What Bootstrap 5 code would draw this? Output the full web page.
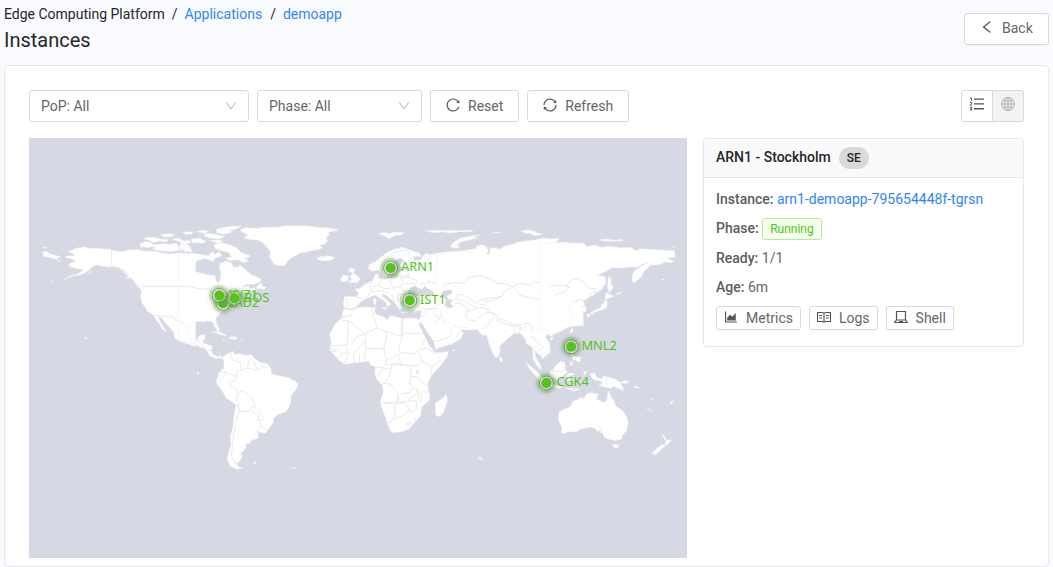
<!DOCTYPE html>
<html lang="en">
<head>
<meta charset="utf-8">
<meta name="viewport" content="width=device-width, initial-scale=1">
<title>Instances</title>
<link rel="stylesheet" href="https://cdn.jsdelivr.net/npm/bootstrap@5.3.0/dist/css/bootstrap.min.css">
<style>
body{background:#fafbff;font:14px/22px Roboto,sans-serif;color:#262626;overflow:hidden;height:567px}
a{color:#2f86f6;text-decoration:none}
h1{font-size:20px;line-height:28px;font-weight:400;margin:1px 0 0}
.page-head{height:65px;padding:3px 4px 0}
.crumb-sep{margin:0 7px}
.tool-btn{--bs-btn-font-size:14px;--bs-btn-line-height:22px;--bs-btn-color:#666;--bs-btn-bg:#fff;--bs-btn-border-color:#d9d9d9;--bs-btn-border-radius:3px;--bs-btn-padding-y:0;--bs-btn-padding-x:15px;height:32px;display:inline-flex;align-items:center;box-shadow:0 2px 0 rgba(0,0,0,.015);white-space:nowrap}
.tool-btn svg{margin-right:8px;position:relative;top:-1px;color:#555}
.small-btn{height:24px;--bs-btn-padding-x:7px;--bs-btn-line-height:20px;padding-bottom:1px}
.back-btn{width:85px;margin:10px 0 0;padding-bottom:2px}
.ico{width:14px;height:14px;fill:currentColor;flex:none}
.main-card{margin:0 4px;height:502px;border:1px solid #e8e8eb;border-radius:4px;padding:24px}
.pick{height:32px;border:1px solid #d9d9d9;border-radius:3px;padding:0 11px;color:#666}
.pick .ico{width:12px;height:12px;color:#bfbfbf}
.seg-btn{width:32px;padding:0;justify-content:center}
.seg-btn svg{margin:0;top:-2px}
.seg-on{--bs-btn-bg:#f3f3f3}
.seg-on svg{color:#b0b0b0}
.map-box{width:658px;height:420px;background:#d6d9e4}
.side-card{width:321px;height:209px;--bs-card-border-color:#e8e8e8;--bs-card-border-radius:3px;--bs-card-inner-border-radius:2px;--bs-card-cap-bg:#fafafa;color:#666}
.side-card .card-header{height:39px;padding:0 12px 2px;font-weight:500;color:#262626;border-color:#e8e8e8}
.side-card .card-body{padding:10px 12px}
.side-card b{font-weight:500;color:#5c5c5c}
.cc{font-size:12px;line-height:22px;height:22px;background:#d9d9d9;border-radius:11px;padding:0 8px;margin-left:8px;position:relative;top:1px}
.run{font-size:12px;line-height:20px;color:#52c41a;background:#f6ffed;border:1px solid #b7eb8f;border-radius:3px;padding:0 7.5px;margin-left:3px;position:relative;top:1px}
.land{fill:#fff;stroke:#eee;stroke-width:1.5;stroke-linejoin:round}
.sea{fill:#d6d9e4}
.lake{fill:#ececf0}
.line{fill:none;stroke:#e7e7e7;stroke-width:2.8;stroke-linejoin:round}
.pins text{font:12.8px "Noto Sans","Open Sans",sans-serif;fill:#52c41a}
</style>
</head>
<body>
<header class="page-head d-flex justify-content-between">
  <div>
    <nav class="d-flex"><span>Edge Computing Platform</span><span class="crumb-sep">/</span><a href="#">Applications</a><span class="crumb-sep ms-2">/</span><a href="#">demoapp</a></nav>
    <h1>Instances</h1>
  </div>
  <button class="btn tool-btn back-btn"><svg class="ico" viewBox="64 64 896 896"><path d="M724 218.3V141c0-6.7-7.7-10.4-12.9-6.3L260.3 486.8a31.86 31.86 0 000 50.3l450.8 352.1c5.3 4.1 12.9.4 12.9-6.3v-77.3c0-4.9-2.3-9.6-6.1-12.6l-360-281 360-281.1c3.8-3 6.1-7.7 6.1-12.6z"/></svg>Back</button>
</header>
<main class="main-card bg-white">
  <div class="d-flex gap-2 mb-3">
    <div class="pick d-flex align-items-center justify-content-between" style="width:220px">PoP: All<svg class="ico" viewBox="64 64 896 896"><path d="M884 256h-75c-5.1 0-9.9 2.5-12.9 6.6L512 654.2 227.9 262.6c-3-4.1-7.8-6.6-12.9-6.6h-75c-6.5 0-10.3 7.4-6.5 12.7l352.6 486.1c12.8 17.6 39 17.6 51.7 0l352.6-486.1c3.9-5.3.1-12.7-6.4-12.7z"/></svg></div>
    <div class="pick d-flex align-items-center justify-content-between" style="width:165px">Phase: All<svg class="ico" viewBox="64 64 896 896"><path d="M884 256h-75c-5.1 0-9.9 2.5-12.9 6.6L512 654.2 227.9 262.6c-3-4.1-7.8-6.6-12.9-6.6h-75c-6.5 0-10.3 7.4-6.5 12.7l352.6 486.1c12.8 17.6 39 17.6 51.7 0l352.6-486.1c3.9-5.3.1-12.7-6.4-12.7z"/></svg></div>
    <button class="btn tool-btn"><svg class="ico" viewBox="64 64 896 896"><path d="M909.1 209.3l-56.4 44.1C775.8 155.1 656.2 92 521.9 92 290 92 102.3 279.5 102 511.5 101.7 743.7 289.8 932 521.9 932c181.3 0 335.8-115 394.6-276.1 1.5-4.2-.7-8.9-4.9-10.3l-56.7-19.5a8 8 0 00-10.1 4.8c-1.8 5-3.8 10-5.9 14.9-17.3 41-42.1 77.8-73.7 109.4A344.77 344.77 0 01655.9 829c-42.3 17.9-87.4 27-133.8 27-46.5 0-91.5-9.1-133.8-27A341.5 341.5 0 01279 755.2a342.16 342.16 0 01-73.7-109.4c-17.9-42.4-27-87.4-27-133.9s9.1-91.5 27-133.9c17.3-41 42.1-77.8 73.7-109.4 31.6-31.6 68.4-56.4 109.3-73.8 42.3-17.9 87.4-27 133.8-27 46.5 0 91.5 9.1 133.8 27a341.5 341.5 0 01109.3 73.8c9.9 9.9 19.2 20.4 27.8 31.4l-60.2 47a8 8 0 003 14.1l175.6 43c5 1.2 9.9-2.6 9.9-7.7l.8-180.9c-.1-6.6-7.8-10.3-13-6.2z"/></svg>Reset</button>
    <button class="btn tool-btn"><svg class="ico" viewBox="64 64 896 896"><path d="M168 504.2c1-43.7 10-86.1 26.9-126 17.3-41 42.1-77.7 73.7-109.4S337 212.3 378 195c42.4-17.9 87.4-27 133.9-27s91.5 9.1 133.8 27A341.5 341.5 0 01755 268.8c9.9 9.9 19.2 20.4 27.8 31.4l-60.2 47a8 8 0 003 14.1l175.7 43c5 1.2 9.9-2.6 9.9-7.7l.8-180.9c0-6.7-7.7-10.5-12.9-6.3l-56.4 44.1C765.8 155.1 646.2 92 511.8 92 282.7 92 96.3 275.6 92 503.8a8 8 0 008 8.2h60c4.4 0 7.9-3.5 8-7.8zm756 7.8h-60c-4.4 0-7.9 3.5-8 7.8-1 43.7-10 86.1-26.9 126-17.3 41-42.1 77.8-73.7 109.4A342.45 342.45 0 01512.1 856a342.24 342.24 0 01-243.2-100.8c-9.9-9.9-19.2-20.4-27.8-31.4l60.2-47a8 8 0 00-3-14.1l-175.7-43c-5-1.2-9.9 2.6-9.9 7.7l-.7 181c0 6.7 7.7 10.5 12.9 6.3l56.4-44.1C258.2 868.9 377.8 932 512.2 932c229.2 0 415.5-183.7 419.8-411.8a8 8 0 00-8-8.2z"/></svg>Refresh</button>
    <div class="btn-group ms-auto">
      <button class="btn tool-btn seg-btn flex-grow-0"><svg class="ico" viewBox="0 0 14 14"><path d="M4 1.5h10v1.300H4zM4 6.300h10v1.300H4zM4 11.100h10v1.300H4z"/><path d="M0 1h1.500v2.500M0 5.600h1.700v1L.2 8h1.800M0 10.200h1.700v2.900H0M.5 11.700h1.200" fill="none" stroke="currentColor"/></svg></button>
      <button class="btn tool-btn seg-btn seg-on flex-grow-0"><svg class="ico" viewBox="0 0 14 14" style="fill:none;stroke:currentColor"><circle cx="7" cy="7" r="6.4"/><path d="M7 .6v12.8M.6 7h12.8M1.8 3.4q5.2 2 10.4 0M1.8 10.6q5.2-2 10.4 0"/><ellipse cx="7" cy="7" rx="3.2" ry="6.4"/></svg></button>
    </div>
  </div>
  <div class="d-flex gap-3 align-items-start">
    <svg class="map-box flex-shrink-0" viewBox="29 138 658 420">
      <defs><radialGradient id="halo"><stop offset=".3" stop-color="#555" stop-opacity=".3"/><stop offset=".62" stop-color="#666" stop-opacity=".14"/><stop offset="1" stop-color="#777" stop-opacity="0"/></radialGradient>
      <g id="pin"><circle r="14" fill="url(#halo)"/><circle r="7" fill="#fff" opacity=".3"/><g fill="none" stroke="#52c41a"><circle r="9.6" stroke-width=".7" opacity=".55"/><circle r="8.3" stroke-width=".7" opacity=".6"/><circle r="7" stroke="#5d7a52" stroke-width="1" opacity=".75"/></g><circle r="5" fill="#52c41a"/></g></defs>
      <!-- Alaska, western Canada and the Pacific coast -->
      <g transform="translate(29 215) scale(.33333)">
        <path class="land" d="M118 110 135 103 150 98 165 96 180 100 205 100 240 103 258 107 280 110 300 105 330 104 345 108 380 109 400 114 425 117 445 114 500 115V395L480 388 455 380 437 370 434 352 420 335 410 325 398 308 388 305 394 320 403 335 413 350 404 346 392 328 381 314 374 301 355 289 346 273 338 262 335 245 338 228 328 215 315 198 305 188 295 180 285 165 270 160 255 156 235 155 215 153 202 149 190 156 180 165 168 174 150 180 130 184 104 194 125 183 145 177 165 164 150 163 125 156 118 148 140 138 130 132 108 127 112 123 136 122 134 116Z"/>
        <path class="land" d="M42 110 52 109 62 116 75 120 95 125 85 128 84 134 68 129 55 126 42 124ZM42 97 53 97 52 99 44 99ZM85 135 97 139 90 140ZM333 87 347 80 366 82 372 89 400 86 420 88 443 85 451 97 450 106 425 110 400 108 372 103 380 95 358 97 335 96ZM343 72 355 66 380 68 400 73 418 73 413 80 390 78 375 83 360 76ZM395 60 420 55 440 60 425 66 405 66ZM428 72 448 70 465 78 480 76 485 84 460 86 450 80ZM455 95 480 90 490 110 470 108ZM462 52 490 50 490 57 470 58ZM276 163 291 173 305 190 291 190 298 184 285 173ZM315 205 330 209 345 222 334 219ZM177 171 188 168 183 173ZM168 367H173V371H168ZM67 197H71V200H67Z"/>
        <path class="line" d="M248 104V155L270 158 285 168 300 180M340 214H500M374 301 430 305 445 318 457 318 473 335"/>
      </g>
      <!-- Eastern North America, Greenland, Caribbean -->
      <g transform="translate(180 215) scale(.33333)">
        <path class="land" d="M-5 115 20 118 50 116 85 122 96 110 105 118 118 110 125 122 105 130 100 140 75 130 50 138 38 158 42 168 70 176 90 180 105 182 108 198 117 203 121 188 123 176 118 158 120 145 140 138 155 145 160 157 175 155 180 150 195 163 215 180 240 190 244 198 225 207 200 208 185 215 205 213 210 222 222 218 230 222 212 230 200 229 190 232 178 240 165 253 145 272 138 284 122 295 108 308 110 325 119 342 115 350 108 342 100 326 94 319 75 318 72 322 55 319 35 324 25 335 22 352 28 368 38 376 52 373 58 361 74 359 75 370 68 382 85 390 96 392 94 405 98 418 112 425 124 422 128 430 117 430 105 430 90 422 76 402 60 396 42 387 20 380-5 375Z"/>
        <path class="land" d="M102 90 120 83 145 88 170 98 185 113 210 122 205 128 195 128 205 138 190 143 175 134 150 137 135 130 155 125 145 112 125 107 106 101ZM180 45 195 38 230 40 250 37 290 37 315 32 350 33 380 32 410 37 440 38 476 44 462 48 441 50 448 58 438 70 443 78 432 88 418 90 428 98 415 104 390 108 360 115 335 128 324 137 315 151 302 153 284 149 276 138 268 125 272 112 262 98 245 80 230 75 205 73 192 68 204 60 188 52ZM411 130 423 124 436 128 448 123 463 127 460 132 447 137 428 138 415 134ZM228 220 237 207 246 205 245 212 257 216 255 223ZM110 42 135 37 160 33 185 34 170 42 145 46 160 50 135 58 110 53ZM75 55 105 58 135 64 120 72 90 70 72 63ZM48 50 68 45 88 49 74 54ZM33 72 60 69 78 80 61 86 36 82ZM0 88 17 82 28 95 20 110 0 108ZM90 76 122 75 130 80 110 84ZM92 352 115 349 137 359 142 364 122 359 110 354ZM144 370 157 363 174 369 164 373ZM126 374 137 376 130 378ZM183 375H190V377H183Z"/>
        <path class="line" d="M-3 214 25 215 55 221 85 223 102 235M177 228 195 216M0 318 20 336M41 386 49 377 60 377M73 382 66 393 80 402M94 405 85 407M158 364V372"/>
        <path class="sea" d="M47 80 80 92 65 96ZM0 100 14 107 10 112Z"/>
      </g>
      <!-- South America -->
      <g transform="translate(180 330) scale(.33333)">
        <path class="land" d="M128 82 140 72 160 64 163 73 180 71 195 76 215 74 225 87 240 96 263 101 273 118 275 132 300 138 325 143 345 153 354 163 349 178 334 196 331 220 324 238 315 247 295 253 281 264 280 278 268 293 257 309 244 309 232 303 235 314 234 325 212 332 211 339 196 343 199 352 190 363 182 371 188 378 180 393 170 402 178 412 192 415 170 418 150 408 142 390 145 370 153 342 150 320 158 295 163 250 168 225 158 217 138 204 129 186 109 158 110 146 115 138 116 128 131 115 132 96ZM216 397 231 397 225 402ZM335 413 348 412 345 416ZM53 125H57V132H53Z"/>
        <path class="line" d="M153 68 150 81 160 90 180 97 185 121 170 125 169 140 155 132 143 129 133 123M116 124 140 130 118 153M169 140 167 150 150 159 151 170 172 178 174 190 190 182 207 195 218 207 225 227 230 230 213 232 208 244 180 245 174 220 170 210 173 191M173 225 180 246 171 258 165 290 160 318 157 350 154 380 170 402M211 241 235 256 230 269 245 271 252 263 233 242M235 256 242 286 229 303M239 285 260 300M185 119 202 115 206 95 215 85M220 93 226 108 233 117M243 98 248 114 264 112M205 114 225 120 245 117"/>
      </g>
      <!-- Europe and western Russia -->
      <g transform="translate(320 220) scale(.33333)">
        <path class="land" d="M73 230 90 229 108 231 116 220 105 207 120 205 131 195 145 188 158 182 164 166 173 160 176 176 195 177 218 175 235 170 236 158 247 151 265 150 275 145 245 144 239 137 254 120 240 113 222 125 214 140 216 154 200 170 192 168 183 155 172 151 154 154 145 145 148 133 165 126 185 110 205 95 225 87 248 82 264 88 298 99 306 110 280 109 284 122 302 119 311 106 320 99 330 105 350 100 376 96 400 95 430 92 470 85V330H390L371 305 358 306 345 298 337 310 290 308 304 288 306 272 288 272 271 269 253 262 250 250 262 242 248 242 242 252 246 266 237 267 227 252 215 239 201 228 190 221 186 228 200 239 212 252 202 263 198 247 181 235 165 225 153 230 136 238 119 248 108 262 84 267 72 260 70 249Z"/>
        <path class="land" d="M83 186 95 180 91 167 100 160 85 152 90 143 105 148 100 158 114 170 121 178 111 188ZM62 178 70 165 86 169 82 182 65 187ZM176 41 190 37 208 41 220 37 253 37 245 45 230 45 217 51 207 56 194 48ZM316 33 345 31 385 32 398 38 366 36 340 38ZM392 80 402 65 420 55 450 48 480 45 445 57 423 64 410 73 420 82 405 84ZM0 28 54 27 35 32 15 43 18 51 0 60ZM0 112 22 108 45 112 36 119 5 122ZM183 264 201 263 196 269ZM160 236 168 234 168 255 161 252ZM242 276 263 277 250 279ZM282 274 290 274 286 278Z"/>
        <path class="sea" d="M266 228 263 213 274 201 287 197 296 205 308 206 314 198 323 206 336 211 345 224 323 229 303 224 286 230ZM371 213 395 207 397 220 380 227 384 236 399 240 390 247 400 260 386 266 374 253 378 239 366 226Z"/>
        <path class="line" d="M181 152 185 138 195 120 215 99 240 92 263 91 268 110 283 128 269 143M224 91 240 108M158 187 149 197 156 213 147 222 137 236M108 231 134 237M80 234 84 264M156 200 175 198 184 182 190 176M175 198 195 206 220 204 212 188 207 178M195 206 184 213 157 214M220 204 242 200 251 188 242 174M242 174 265 172 291 181 290 191 253 191M265 172 263 153M242 200 260 222 236 222 220 204M236 222 231 244M260 222 255 236M238 170 269 165M322 176 330 186 355 190 370 200 360 211M330 186 300 193M340 223 364 230M343 228 355 240 357 265 306 268M357 265 371 290 374 305M307 285 337 265M323 276 350 300M184 213 205 220M216 222 222 243M260 240 255 248"/>
      </g>
      <!-- Africa and Arabia -->
      <g transform="translate(320 300) scale(.33333)">
        <path class="land" d="M72 25 88 30 108 24 135 21 166 22 164 37 172 45 192 51 203 60 211 47 225 49 247 56 265 55 290 55 299 72 292 64 306 92 318 116 329 139 346 157 364 158 386 154 381 171 363 195 335 226 322 252 328 280 330 298 305 322 301 349 285 365 269 386 247 395 218 398 210 390 200 363 187 327 180 306 190 276 187 256 170 238 164 221 167 201 151 194 146 183 123 187 102 188 76 193 55 180 43 165 28 149 34 126 28 104 45 72 66 54 68 39ZM378 283 383 300 371 336 360 350 347 345 346 309 369 294Z"/>
        <path class="land" d="M302 40 330 28 352 44 363 60 377 72 392 86 407 79 431 98 421 117 396 132 370 139 346 148 341 123 323 99 304 67ZM350 20 460 20V82L430 82 405 74 382 68 362 51ZM398 151H405V153H398Z"/>
        <path class="lake" d="M269 238 272 235 272 254 269 253ZM287 209 298 211 295 223 287 221Z"/>
        <path class="line" d="M66 61 84 62 83 135 33 138M84 62 136 101 107 111 92 136M67 52 92 46 107 25M155 23 161 48 167 69 170 84 136 101 138 116 121 140M170 84 195 92 200 108 191 145 138 146 136 119M195 92 244 109V56M249 56V100H308M249 100 247 112 237 136 241 159 223 171 199 181 191 145M243 158 282 161 296 151 309 133 315 118M303 148 322 145 343 157M298 160 306 184 336 199 354 189 362 178 339 155M336 199 332 226M306 184 291 198 241 194 238 167M199 181 188 203 168 202M199 194 238 190M137 146 133 188M121 142 101 161 102 188M118 164V186M80 141 87 159 74 190M51 176 69 160 86 160M30 145 53 151 68 162M33 154 49 154M188 203 175 230M189 207 214 204 215 193M213 204 205 238 188 250M189 250 212 252 232 278 232 306 184 308M215 195 240 195 274 198 273 229 287 230 304 244 319 257M273 230 268 251 277 263 269 279 242 281 234 301M278 264 294 270 292 282 273 292 263 305 233 306M292 271 299 300 306 303 302 276 328 276M192 309 224 311 225 345 213 368 203 367M227 313 255 309 269 331 247 348 225 357M263 307 275 301 291 305 289 329 280 337 268 331M262 371 269 366 273 374 265 378ZM283 351 287 356 284 361M337 43 360 57 344 70M304 50 320 41M341 124 371 119 391 108 395 91M410 110 419 94"/>
      </g>
      <!-- Asia -->
      <g transform="translate(440 220) scale(.33333)">
        <path class="land" d="M0 105 15 98 40 95 70 93 95 96 108 92 109 78 128 74 140 80 145 95 138 105 148 101 150 84 165 83 180 88 194 79 220 72 238 65 285 60 310 54 338 57 351 68 375 67 430 72V315L383 322 365 333 340 343 334 350 324 343 309 354 318 367 331 383 330 399 316 408 307 418 303 408 292 400 286 391 285 412 293 427 303 442 303 450 289 433 281 416 279 389 274 370 261 372 257 354 248 340 225 340 215 345 195 364 180 378 179 399 171 413 163 409 150 381 140 346 127 346 111 328 89 323 58 322 40 315 25 306 12 292-10 285-10 110Z"/>
        <path class="sea" d="M8 213 34 209 37 220 20 228 24 236 40 241 30 248 41 260 24 265 14 255 18 239 5 227Z"/>
        <path class="land" d="M177 411 182 410 189 421 180 426ZM31 80 42 66 65 58 96 52 114 54 82 61 60 67 49 76 58 83 42 84ZM242 33 266 29 282 34 296 40 310 43 286 47 269 40 256 40ZM329 357 341 351 335 361ZM0 33 30 31 60 32 95 30 99 35 60 35 32 39ZM343 441 364 423 374 427 377 450 344 450ZM258 430 272 439 289 452 280 453ZM159 37H180V39H159ZM39 390H44V392H39Z"/>
        <path class="line" d="M9 204 16 193 45 188 69 190 85 181 80 173 120 167 151 176 174 190 202 193 217 200 202 210 190 219 187 229 150 235 123 237 113 249 102 244 91 236 71 226 51 222 54 238 42 238M218 200 235 190 273 196 280 185 328 193 367 192 389 207 374 218 341 222 326 235 288 238 240 226 232 212 217 199M54 238 74 243 92 255 113 265 132 262 144 276 168 283 174 296 190 300 224 315 242 314 262 309 274 315 278 336 295 347 303 338 320 335 341 343M42 252 60 249 84 265 78 286 84 300 107 301 136 278 154 276 163 288 150 305 141 320 128 328M113 265 81 276M123 239 150 244 187 229M118 253 133 253 147 242M137 264 150 269M174 296 170 301 190 311 222 319 223 339M224 318 242 321 239 340M258 316 246 333M274 341 271 351 284 368 276 382M284 347 297 349 300 361 318 381M281 366 298 360M294 395 310 379M2 278 7 295M344 448 373 442M374 210 430 201"/>
      </g>
      <g transform="translate(550 220) scale(.33333)">
        <path class="land" d="M-30 70 0 71 30 68 50 72 75 69 102 70 109 79 135 76 155 82 180 78 210 83 243 82 258 92 270 86 302 88 374 92 375 112 351 115 363 120 372 124 363 128 347 126 328 134 300 136 291 146 280 155 276 169 252 189 245 180 249 160 258 148 268 145 272 138 296 127 276 132 265 142 240 141 212 145 185 143 170 153 143 166 166 170 168 186 157 206 130 226 118 231 107 239 98 242 109 265 107 276 96 277 94 260 87 247 71 249 78 243 66 242 48 253 64 255 57 265 69 290 64 308 51 323 28 334 8 343-30 345Z"/>
        <path class="land" d="M175 171 182 174 183 190 190 205 183 210 178 218 172 201ZM168 217 176 221 193 229 176 235 168 239 165 230ZM167 239 172 247 169 264 155 270 140 274 126 279 132 272 149 264 159 250ZM124 277 134 278 129 284 119 281ZM113 281 121 286 116 293 110 286ZM65 324 69 327 64 340 60 334ZM148 59 167 57 199 61 215 57 219 62 193 64 160 63ZM0 57 26 55 21 66 0 69ZM198 222 220 214 207 223ZM368 80 375 81 370 83ZM336 178H342V180H336ZM97 317H103V319H97Z"/>
        <path class="line" d="M0 200 20 195 43 196 58 203 39 217 12 226M60 204 50 195 65 178 82 176 104 188 119 205 136 205 136 218 126 218 122 229M76 244 94 239 103 242M95 261 106 260"/>
      </g>
      <!-- South-east Asia and Oceania -->
      <g transform="translate(520 330) scale(.33333)">
        <path class="land" d="M117 246 135 236 150 231 160 213 171 210 183 202 192 206 199 193 210 188 235 192 229 207 251 218 261 211 263 189 268 184 274 204 282 211 288 229 306 240 321 261 325 279 319 302 306 319 306 327 285 332 263 327 252 321 247 307 240 310 243 296 234 305 227 298 214 291 183 297 168 305 143 306 129 312 123 306 127 296 115 268ZM278 343 297 344 294 353 287 355 278 348Z"/>
        <path class="land" d="M209 130 224 130 231 142 244 147 250 139 263 140 285 147 300 157 312 181 292 175 281 168 273 175 253 171 236 165 247 161 242 153 224 151 214 142ZM17 98 32 109 60 134 76 157 60 154 39 129 27 115ZM91 123 101 118 109 106 123 93 128 99 125 109 142 125 128 139 116 149 96 143 88 134ZM142 131 163 130 158 136 147 136 152 145 149 155 140 152ZM151 60 160 64 158 75 166 81 181 80 181 95 171 94 166 89 158 89ZM149 102 160 92 154 108ZM79 162 100 164 125 170 122 175 99 171 79 167ZM134 174 159 175 180 178 160 184 150 179ZM190 126 201 124 193 137ZM316 151 329 156 319 161 300 158ZM343 167 364 175 345 174ZM379 233 397 244 385 239ZM423 309 434 318 438 329 455 330 443 343 432 348 438 335ZM427 342 435 348 417 364 408 374 394 370 411 355ZM450 218 463 211 455 222ZM394 205H397V211H394ZM0 0 80 0 87 10 76 20 88 38 90 54 76 65 65 75 65 62 50 53 42 49 46 80 61 105 63 118 50 107 39 87 39 52 20 42 15 26 0 8Z"/>
        <path class="line" d="M260 139V170M96 124 125 124 135 117M31 22 43 21 47 34 68 52M64 57 72 51M153 178 163 178"/>
      </g>
      <path class="land" stroke-width=".4" d="M479 458h3v1h-3z"/>
      <g class="pins">
        <use href="#pin" x="223" y="303.3"/><text x="230" y="307">IAD2</text>
        <use href="#pin" x="234.5" y="298.3"/><text x="244" y="301.5">BOS</text>
        <use href="#pin" x="219.3" y="295.5"/><text x="229" y="299">YYZ1</text>
        <use href="#pin" x="390.6" y="268"/><text x="401" y="271">ARN1</text>
        <use href="#pin" x="409.8" y="300.4"/><text x="420" y="304">IST1</text>
        <use href="#pin" x="571.2" y="346.8"/><text x="581.4" y="350">MNL2</text>
        <use href="#pin" x="546.4" y="383"/><text x="556.4" y="386">CGK4</text>
      </g>
    </svg>
    <section class="card side-card">
      <div class="card-header d-flex align-items-center">ARN1 - Stockholm<span class="cc">SE</span></div>
      <div class="card-body">
        <div style="margin-bottom:7px"><b>Instance:</b> <a href="#">arn1-demoapp-795654448f-tgrsn</a></div>
        <div class="d-flex align-items-center" style="margin-bottom:8px"><b>Phase:</b><span class="run">Running</span></div>
        <div style="margin-bottom:7px"><b>Ready:</b> 1/1</div>
        <div style="margin-bottom:8px"><b>Age:</b> 6m</div>
        <div class="d-flex gap-2">
          <button class="btn tool-btn small-btn"><svg class="ico" viewBox="64 64 896 896"><path d="M888 792H200V168c0-4.400-3.600-8-8-8h-56c-4.400 0-8 3.600-8 8v688c0 4.400 3.600 8 8 8h752c4.400 0 8-3.600 8-8v-56c0-4.400-3.600-8-8-8zm-616-64h536c4.400 0 8-3.600 8-8V284c0-7.200-8.700-10.700-13.700-5.700L592 488.600l-125.400-124a8.030 8.030 0 00-11.300 0l-189 189.600a7.870 7.870 0 00-2.300 5.600V720c0 4.400 3.600 8 8 8z"/></svg>Metrics</button>
          <button class="btn tool-btn small-btn"><svg class="ico" viewBox="0 0 14 14" style="fill:none;stroke:currentColor"><path d="M.5 2.500H5.500L7 3.200 8.500 2.500h5v9h-5L7 12.200 5.500 11.500H.5zM7 3v9M2.300 5.500H5M2.300 8H5M9 5.500h2.700M9 8h2.700" stroke-width="1.1"/></svg>Logs</button>
          <button class="btn tool-btn small-btn"><svg class="ico" viewBox="0 0 14 14" style="fill:none;stroke:currentColor"><path d="M2.500 1.500h9v8.500h-9zM2.300 10 .7 12.500h12.600L11.700 10M5 11.500h4" stroke-width="1.200"/></svg>Shell</button>
        </div>
      </div>
    </section>
  </div>
</main>
<script src="https://cdn.jsdelivr.net/npm/bootstrap@5.3.0/dist/js/bootstrap.bundle.min.js"></script>
</body>
</html>
